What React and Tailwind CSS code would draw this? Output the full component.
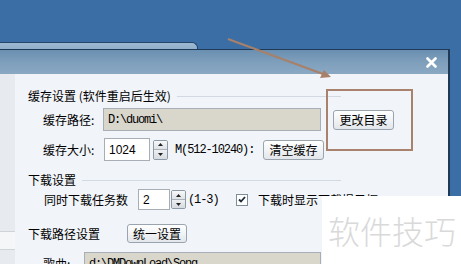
import React from 'react';

const cjk = "font-['Noto_Sans_CJK_SC',sans-serif]";
const mono = "font-['Liberation_Mono','Noto_Sans_CJK_SC',monospace]";

const Spinner = ({ h = 'h-[20px]' }) => (
  <div className={`w-[15px] ${h} flex flex-col border border-[#8d99a6] rounded-[2px] overflow-hidden`}>
    <div className="flex-1 flex items-center justify-center bg-gradient-to-b from-[#f7f8f9] to-[#dfe3e7] border-b border-[#a9b2bb]">
      <svg width="5" height="3" viewBox="0 0 5 3"><polygon points="2.5,0 5,3 0,3" fill="#222" /></svg>
    </div>
    <div className="flex-1 flex items-center justify-center bg-gradient-to-b from-[#eef0f2] to-[#d6dbe0]">
      <svg width="5" height="3" viewBox="0 0 5 3"><polygon points="0,0 5,0 2.5,3" fill="#222" /></svg>
    </div>
  </div>
);

const Btn = ({ children, className = '' }) => (
  <button className={`flex items-center justify-center border border-[#9aa4ae] rounded-[3px] bg-gradient-to-b from-[#ffffff] to-[#e3e7eb] text-[12px] text-black ${className}`}>
    {children}
  </button>
);

const Header = ({ children }) => (
  <div className="flex items-center h-[16px] w-[313px] gap-[6px]">
    <span className="text-[12px] leading-[16px] whitespace-nowrap">{children}</span>
    <div className="flex-1 h-px bg-[#d3d9e0]" />
  </div>
);

export default function App() {
  return (
    <div className={`relative w-[461px] h-[264px] overflow-hidden bg-[#3a6ea5] ${cjk} text-black`}>
      {/* window behind */}
      <div className="absolute left-0 top-[42px] w-[198px] h-[20px] rounded-tr-[6px] border-t border-r border-[#24466b] bg-gradient-to-b from-[#9db9d2] to-[#7a9dbc]" />

      {/* dialog */}
      <div className="absolute left-0 top-[49px] w-[450px] h-[240px] flex flex-col border-t border-r-2 border-[#1f3a56]">
        <div className="h-[24px] flex items-center justify-end pr-[11px] bg-gradient-to-b from-[#6a8fb0] via-[#7e9fbc] to-[#8aa8c2]">
          <svg width="11" height="11" viewBox="0 0 11 11">
            <path d="M1.5 1.5 L9.5 9.5 M9.5 1.5 L1.5 9.5" stroke="#fff" strokeWidth="2.6" strokeLinecap="round" />
          </svg>
        </div>
        <div className="flex flex-1 bg-[#f1f4f8]">
          <div className="w-[15px] bg-[#e7eaee] flex flex-col">
            <div className="h-[157px]" />
            <div className="h-[19px] bg-[#f5f6f7] border-y border-[#cfd4d9]" />
          </div>
          <div className="flex-1 pl-[13px] pt-[14px] flex flex-col">
            <Header>缓存设置 (软件重启后生效)</Header>

            <div className="flex items-center mt-[4px] pl-[15px]">
              <span className="w-[60px] text-[12px]">缓存路径:</span>
              <div className={`w-[218px] h-[23px] flex items-center pl-[4px] bg-[#d9d6cc] border border-[#a7aeb6] text-[12px] tracking-[-1.2px] ${mono}`}>D:\duomi\</div>
              <Btn className="ml-[12px] w-[61px] h-[20px]">更改目录</Btn>
            </div>

            <div className="flex items-center mt-[7px] pl-[15px]">
              <span className="w-[61px] text-[12px]">缓存大小:</span>
              <div className="w-[46px] h-[23px] flex items-center pl-[4px] bg-white border border-[#a7aeb6] text-[12px] font-['Liberation_Sans',sans-serif]">1024</div>
              <div className="ml-[3px]"><Spinner /></div>
              <span className={`ml-[7px] w-[88px] text-[12px] tracking-[-1.1px] whitespace-nowrap ${mono}`}>M(512-10240):</span>
              <Btn className="w-[61px] h-[20px]">清空缓存</Btn>
            </div>

            <div className="mt-[11px]">
              <Header>下载设置</Header>
            </div>

            <div className="flex items-center mt-[1px] pl-[16px]">
              <span className="w-[94px] text-[12px]">同时下载任务数</span>
              <div className="w-[32px] h-[21px] flex items-center pl-[4px] bg-white border border-[#a7aeb6] text-[12px] font-['Liberation_Sans',sans-serif]">2</div>
              <div className="ml-[1px]"><Spinner h="h-[19px]" /></div>
              <span className={`ml-[2px] w-[48px] text-[12px] tracking-[-1.1px] ${mono}`}>(1-3)</span>
              <div className="w-[12px] h-[12px] bg-white border border-[#7f8c99] flex items-center justify-center">
                <svg width="8" height="7" viewBox="0 0 8 7">
                  <path d="M1 3.5 L3 5.5 L7 1" stroke="#1e2a36" strokeWidth="1.8" fill="none" />
                </svg>
              </div>
              <span className="ml-[10px] text-[12px] whitespace-nowrap">下载时显示下载提示框</span>
            </div>

            <div className="flex items-center mt-[14px]">
              <span className="w-[99px] text-[12px]">下载路径设置</span>
              <Btn className="w-[60px] h-[19px]">统一设置</Btn>
            </div>

            <div className="flex items-center mt-[9px] pl-[15px]">
              <span className="w-[41px] text-[12px]">歌曲:</span>
              <div className={`w-[237px] h-[23px] flex items-center pl-[4px] bg-[#d9d6cc] border border-[#a7aeb6] text-[12px] tracking-[-1.2px] ${mono}`}>d:\DMDownLoad\Song</div>
            </div>
          </div>
        </div>
      </div>

      {/* annotation */}
      <div className="absolute left-[326px] top-[89px] w-[87px] h-[62px] border-2 border-[#a8826c]" />
      <svg className="absolute left-0 top-0" width="461" height="264" viewBox="0 0 461 264">
        <line x1="228" y1="39" x2="323" y2="74" stroke="#a88069" strokeWidth="2" />
        <polygon points="331,77 320,78 324,70" fill="#a88069" />
      </svg>

      {/* watermark */}
      <div className="absolute left-[322px] top-[196px] w-[139px] h-[68px] bg-white flex items-center pl-[6px]">
        <span className="text-[32px] leading-[40px] text-[#d9d9d9] font-light whitespace-nowrap">软件技巧</span>
      </div>
    </div>
  );
}
